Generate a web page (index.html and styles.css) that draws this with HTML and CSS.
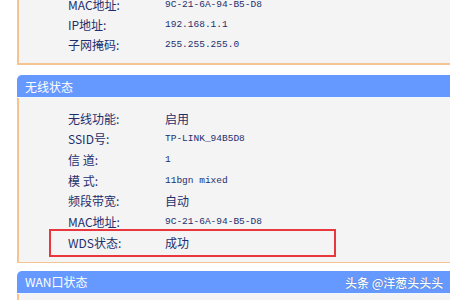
FILE: index.html
```html
<!DOCTYPE html>
<html lang="zh-CN">
<head>
    <meta charset="UTF-8">
    <link rel="stylesheet" href="styles.css">
    <title>运行状态</title>
</head>
<body>
    <div class="page">
        <div class="panel panel-top">
            <div class="panel-body">
                <div class="row"><span class="label">MAC地址:</span><span class="value">9C-21-6A-94-B5-D8</span></div>
                <div class="row"><span class="label">IP地址:</span><span class="value">192.168.1.1</span></div>
                <div class="row"><span class="label">子网掩码:</span><span class="value">255.255.255.0</span></div>
            </div>
        </div>

        <div class="panel panel-wireless">
            <div class="panel-head">无线状态</div>
            <div class="panel-body">
                <div class="row"><span class="label">无线功能:</span><span class="value zh">启用</span></div>
                <div class="row"><span class="label">SSID号:</span><span class="value">TP-LINK_94B5D8</span></div>
                <div class="row"><span class="label">信&nbsp;道:</span><span class="value">1</span></div>
                <div class="row"><span class="label">模&nbsp;式:</span><span class="value">11bgn mixed</span></div>
                <div class="row"><span class="label">频段带宽:</span><span class="value zh">自动</span></div>
                <div class="row"><span class="label">MAC地址:</span><span class="value">9C-21-6A-94-B5-D8</span></div>
                <div class="row row-marked"><span class="label">WDS状态:</span><span class="value zh">成功</span></div>
            </div>
        </div>

        <div class="panel panel-wan">
            <div class="panel-head">
                <span>WAN口状态</span>
                <span class="watermark">头条 @洋葱头头头</span>
            </div>
            <div class="panel-body"></div>
        </div>
    </div>
</body>
</html>
```

FILE: styles.css
```css
body {
    margin: 0;
    background-color: #fff;
    font-family: "Noto Sans CJK SC", "Liberation Sans", sans-serif;
    font-size: 12px;
    color: #1e2f6e;
    overflow: hidden;
}

.page {
    width: 520px;
    padding-left: 17px;
    margin-top: -14px;
}

.panel {
    margin-bottom: 10px;
}

.panel-body {
    background-color: #f4f4f4;
    border-left: 2px solid #f6c490;
    border-bottom: 2px solid #f6c490;
}

.panel-top .panel-body {
    padding: 8px 0 9px;
}

.panel-wireless {
    margin-bottom: 8px;
}

.panel-wireless .panel-body {
    padding: 10px 0 9px;
    border-bottom-width: 1px;
}

.panel-wan .panel-body {
    height: 20px;
    border-bottom: none;
}

.panel-head {
    position: relative;
    display: flex;
    align-items: center;
    height: 22px;
    padding: 0 10px 0 8px;
    background-color: #6699ff;
    color: #fff;
    border-top-left-radius: 5px;
    border-bottom: 1px solid #eef8ff;
    font-size: 12px;
}

/* watermark stamped over the screenshot */
.watermark {
    position: absolute;
    left: 328px;
    top: 3px;
    font-size: 12px;
    font-weight: 500;
    text-shadow: 0 0 1px rgba(0, 0, 0, 0.4);
}

.row {
    display: flex;
    align-items: center;
    height: 20px;
    padding-left: 49px;
    white-space: nowrap;
}

.panel-wireless .row {
    height: 20.67px;
}

.label {
    width: 97px;
}

.value {
    font-family: "Liberation Mono", "Noto Sans CJK SC", monospace;
    font-size: 9.5px;
}

.value.zh {
    font-family: "Noto Sans CJK SC", sans-serif;
    font-size: 12px;
}

.row-marked {
    position: relative;
}

.row-marked::after {
    content: "";
    position: absolute;
    left: 30px;
    top: -3px;
    width: 283px;
    height: 24px;
    border: 2px solid #e8383d;
}
```
